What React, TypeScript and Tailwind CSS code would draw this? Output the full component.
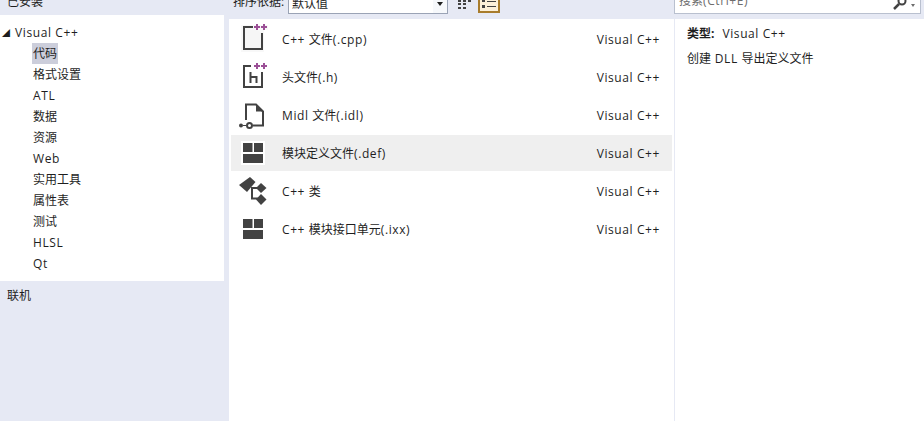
const font = "[font-family:'Open_Sans','Noto_Sans_CJK_SC',sans-serif]";

const tree = ["代码", "格式设置", "ATL", "数据", "资源", "Web", "实用工具", "属性表", "测试", "HLSL", "Qt"];

function T({ s }: { s: string }) {
  const parts = s.match(/[\x20-\x7e]+|[^\x20-\x7e]+/g) ?? [];
  return (
    <span className="whitespace-pre">
      {parts.map((p, i) =>
        /^[\x20-\x7e]/.test(p) ? (
          <span key={i} className="tracking-[0.6px]">{p}</span>
        ) : (
          <span key={i}>{p}</span>
        )
      )}
    </span>
  );
}

function Plus({ y }: { y: number }) {
  return <path d={`M14 ${y}h6M17 ${y - 3}v6M21 ${y}h6M24 ${y - 3}v6`} stroke="#9b4f96" strokeWidth="2" />;
}
function Cpp() {
  return (
    <svg width="30" height="30" viewBox="0 0 30 30" className="overflow-visible">
      <path d="M1 1H28V6H24V28H1Z" fill="#f8f8f8" />
      <path d="M13 3H4V25H22V9" fill="#f6f6f6" stroke="#424242" strokeWidth="2" />
      <Plus y={3} />
    </svg>
  );
}
function Header() {
  return (
    <svg width="30" height="30" viewBox="0 0 30 30" className="overflow-visible">
      <path d="M11 4H4V25H22V10" fill="#fff" stroke="#424242" strokeWidth="2" />
      <path d="M10.500 10V21M10.500 15H16.500V21" fill="none" stroke="#424242" strokeWidth="2" />
      <Plus y={4} />
    </svg>
  );
}
function Midl() {
  return (
    <svg width="30" height="30" viewBox="0 0 30 30" className="overflow-visible">
      <path d="M6 20V4.500H16L23 11.500V25.500H13" fill="#fff" stroke="#424242" strokeWidth="2" />
      <path d="M16 4L23.500 11.500H16Z" fill="#424242" />
      <circle cx="1" cy="25.500" r="2" fill="#424242" />
      <path d="M3 25.500h3" stroke="#424242" strokeWidth="1" />
      <circle cx="9.500" cy="25.500" r="2.500" fill="none" stroke="#424242" strokeWidth="2" />
    </svg>
  );
}
function Module() {
  return (
    <svg width="30" height="30" viewBox="0 0 30 30" className="overflow-visible">
      <path d="M1 3h24v24H1z" fill="#fff" />
      <path d="M3 5h9.500v9H3zM14 5h9v9h-9zM3 16h20v9H3z" fill="#424242" />
    </svg>
  );
}
function ClassIcon() {
  return (
    <svg width="30" height="30" viewBox="0 0 30 30" className="overflow-visible">
      <path d="M-1 9L10 1L15.500 6L7 16Z" fill="#424242" />
      <path d="M21 7L26.500 12L21 17L16 12Z" fill="#424242" />
      <path d="M21 18L26.500 23.500L21 29L16 23.500Z" fill="#424242" />
      <path d="M12 11V22.500H18M12 12H18" fill="none" stroke="#424242" strokeWidth="2" />
    </svg>
  );
}
function GridIcon() {
  return (
    <svg width="13" height="9" viewBox="0 0 13 9" className="overflow-visible">
      <path d="M0 0h3v2H0zM5 0h3v2H5zM10 0h3v2h-3zM0 3h3v2H0zM5 3h3v2H5zM0 7h3v2H0zM5 7h3v2H5z" fill="#424242" />
    </svg>
  );
}
function ListIcon() {
  return (
    <svg width="14" height="8" viewBox="0 0 14 8" className="overflow-visible">
      <path d="M0 0h3v2H0zM5 1h9v1H5zM0 5h3v3H0zM5 6h9v1H5z" fill="#424242" />
    </svg>
  );
}
function SearchIcon() {
  return (
    <svg width="14" height="10" viewBox="0 0 14 10" className="overflow-visible">
      <circle cx="9" cy="1" r="3.500" fill="none" stroke="#424242" strokeWidth="2" />
      <path d="M6 4L1 9" stroke="#424242" strokeWidth="2.500" />
    </svg>
  );
}

const rows = [
  { name: "C++ 文件(.cpp)", icon: <Cpp /> },
  { name: "头文件(.h)", icon: <Header /> },
  { name: "Midl 文件(.idl)", icon: <Midl /> },
  { name: "模块定义文件(.def)", icon: <Module />, selected: true },
  { name: "C++ 类", icon: <ClassIcon /> },
  { name: "C++ 模块接口单元(.ixx)", icon: <Module /> },
];

export default function App() {
  return (
    <div className={`w-[924px] h-[421px] overflow-hidden bg-[#e6e9f4] text-[#1e1e1e] text-[12px] ${font}`}>
      <div className="h-[15px] flex">
        <div className="w-[229px] pl-[7px] -mt-[7px] leading-[17px]">已安装</div>
        <div className="w-[445px] flex items-start -mt-[7px]">
          <span className="leading-[17px] ml-[4px] w-[55px]">排序依据:</span>
          <div className="w-[160px] h-[21px] border border-[#9aa3b5] bg-white flex justify-between items-center pl-[3px]">
            <span>默认值</span>
            <span className="w-[14px] h-full bg-[#f6f8fb] flex items-center justify-center">
              <span className="w-0 h-0 border-x-[3px] border-x-transparent border-t-[4px] border-t-[#1e1e1e]" />
            </span>
          </div>
          <div className="ml-[10px] mt-[7px] w-[10px] h-[9px]"><GridIcon /></div>
          <div className="ml-[10px] h-[20px] w-[22px] border-2 border-[#a87c2c] bg-[#fdf0d8] pt-[5px] pl-[2px]"><ListIcon /></div>
        </div>
        <div className="grow">
          <div className="h-[14px] w-[247px] border border-[#b9c0cf] border-t-0 bg-white flex justify-between text-[#6d6d6d] pl-[4px] pr-[5px] leading-[8px]">
            <span className="-mt-[3px]"><T s="搜索(Ctrl+E)" /></span>
            <span className="flex items-start gap-[4px]">
              <SearchIcon />
              <span className="mt-[4px] w-0 h-0 border-x-[2.5px] border-x-transparent border-t-[3px] border-t-[#6d6d6d]" />
            </span>
          </div>
        </div>
      </div>
      <div className="flex h-[406px]">
        <div className="w-[224px] shrink-0">
          <div className="h-[266px] bg-white pt-[7px]">
            <div className="h-[21px] flex items-center">
              <span className="w-[15px] pl-[2px] text-[8px]">◢</span>
              <span><T s="Visual C++" /></span>
            </div>
            {tree.map((t, i) => (
              <div key={t} className="h-[21px] pl-[32px] flex items-center">
                <span className={i === 0 ? "bg-[#cccedb] px-[1px] h-[21px] leading-[21px]" : "px-[1px]"}><T s={t} /></span>
              </div>
            ))}
          </div>
          <div className="pl-[7px] pt-[6px] leading-[17px]">联机</div>
        </div>
        <div className="ml-[5px] w-[445px] mt-[4px] bg-white shrink-0 pt-[2px] px-[2px]">
          {rows.map((r) => (
            <div key={r.name} className={`h-[36px] mb-[2px] flex items-center ${r.selected ? "bg-[#efefef]" : ""}`}>
              <div className="w-[51px] pl-[9px] shrink-0">{r.icon}</div>
              <span className="grow pt-[2px]"><T s={r.name} /></span>
              <span className="mr-[12px] pt-[2px]"><T s="Visual C++" /></span>
            </div>
          ))}
        </div>
        <div className="grow bg-white mt-[4px] border-l border-[#e6e9f4] pl-[12px] pt-[2px]">
          <div className="h-[26px] flex items-center"><b className="font-bold mr-[8px]">类型:</b><T s="Visual C++" /></div>
          <div className="h-[24px] flex items-center"><T s="创建 DLL 导出定义文件" /></div>
        </div>
      </div>
    </div>
  );
}
